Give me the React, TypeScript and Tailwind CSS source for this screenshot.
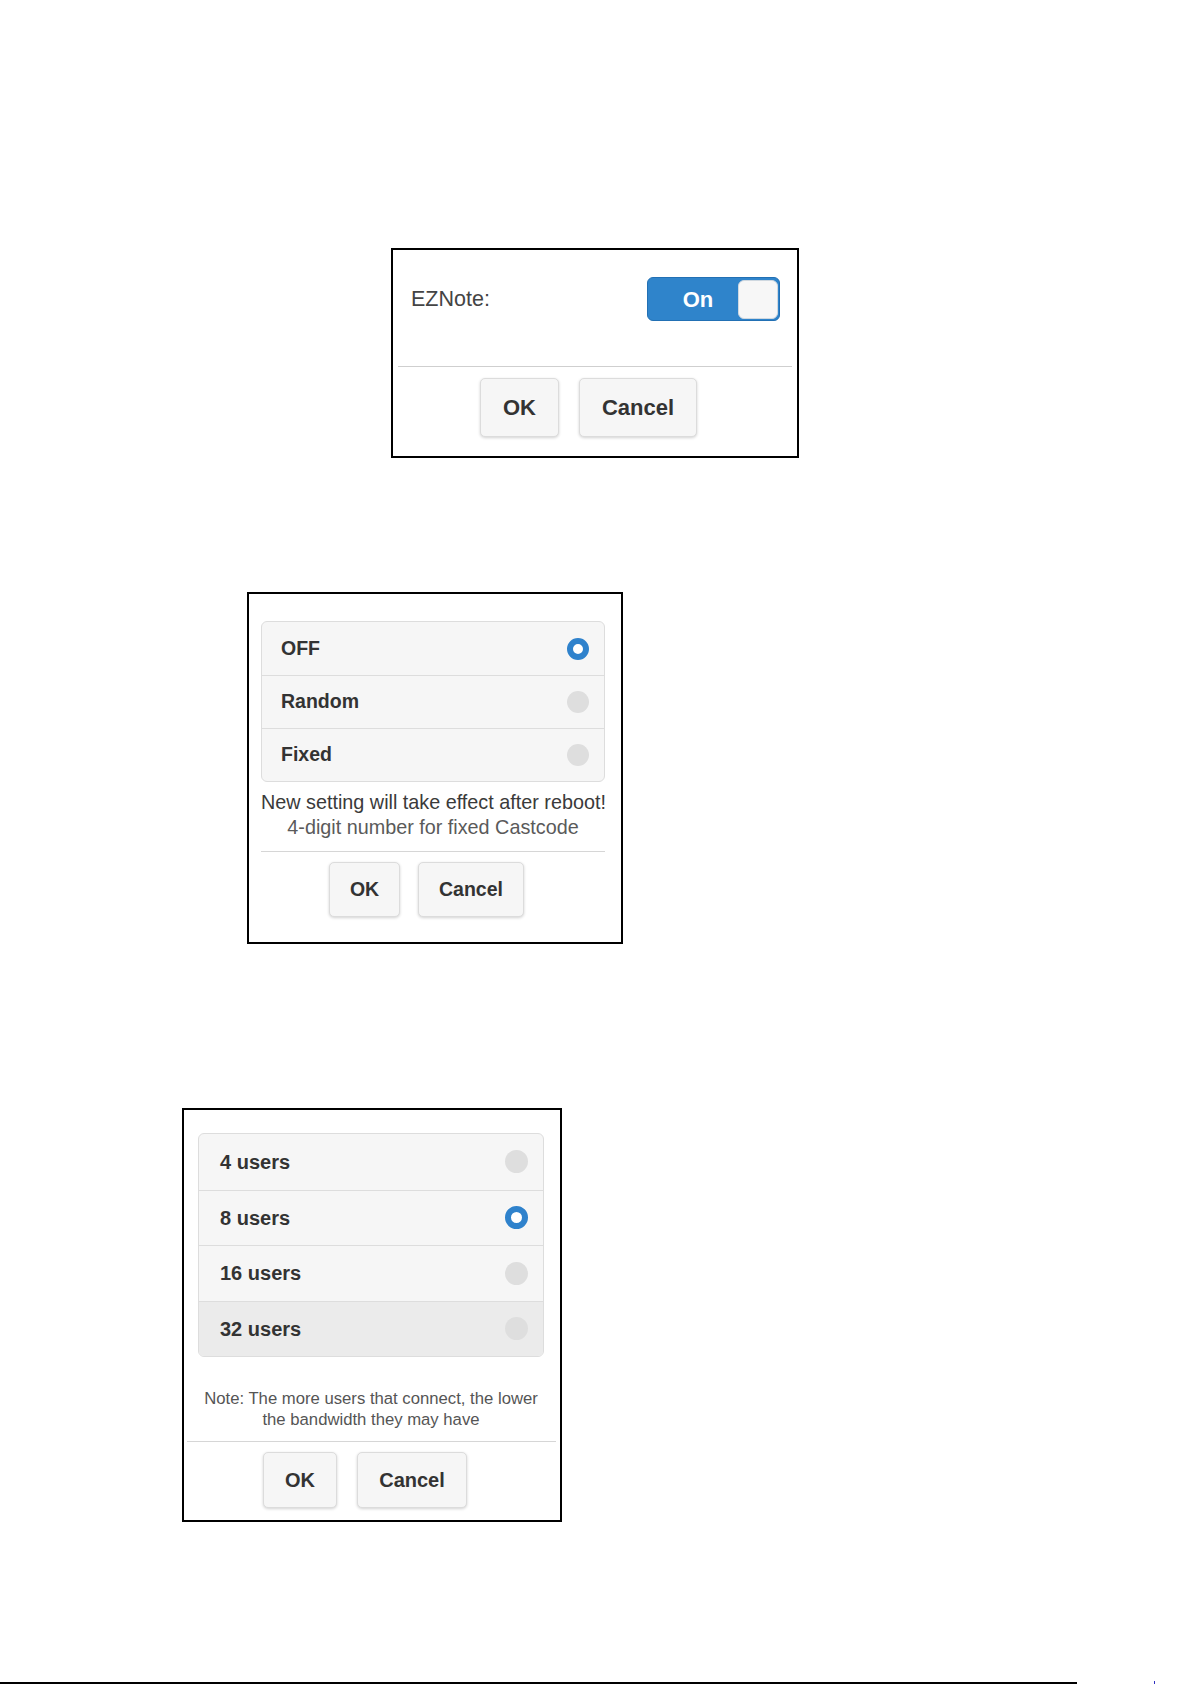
import React from "react";

type Option = { label: string; selected?: boolean; shaded?: boolean };

function Radio({ selected, size }: { selected?: boolean; size: string }) {
  if (selected) {
    return <span className={`${size} rounded-full border-[6px] border-[#2f82cc] bg-white`} />;
  }
  return <span className={`${size} rounded-full bg-[#dedede]`} />;
}

function Btn({ label, className }: { label: string; className: string }) {
  return (
    <button
      className={`flex items-center justify-center rounded-[5px] border border-[#dcdcdc] bg-[#f6f6f6] font-bold text-[#333] shadow-[0_1px_3px_rgba(0,0,0,0.18)] ${className}`}
    >
      {label}
    </button>
  );
}

export default function App() {
  const castcode: Option[] = [{ label: "OFF", selected: true }, { label: "Random" }, { label: "Fixed" }];
  const users: Option[] = [
    { label: "4 users" },
    { label: "8 users", selected: true },
    { label: "16 users" },
    { label: "32 users", shaded: true },
  ];

  return (
    <div className="flex h-[1685px] w-[1192px] flex-col bg-white font-['Liberation_Sans',Arial,sans-serif]">
      {/* EZNote */}
      <div className="ml-[391px] mt-[248px] flex h-[210px] w-[408px] flex-col border-2 border-black">
        <div className="mt-[27px] flex h-[44px] items-center justify-between pl-[18px] pr-[17px]">
          <span className="text-[21.5px] text-[#444]">EZNote:</span>
          <div className="flex h-[44px] w-[133px] items-center rounded-[6px] border border-[#2270b4] bg-[#2f84cb] pr-[1px] pl-[10px]">
            <span className="flex-1 text-center text-[22px] font-bold text-white">On</span>
            <span className="h-[39px] w-[40px] rounded-[6px] border border-[#cfd8e0] bg-[#f7f7f7]" />
          </div>
        </div>
        <div className="mx-[5px] mt-[45px] h-px bg-[#cfcfcf]" />
        <div className="ml-[87px] mt-[11px] flex gap-[20px]">
          <Btn label="OK" className="h-[59px] w-[79px] text-[22px]" />
          <Btn label="Cancel" className="h-[59px] w-[118px] text-[22px]" />
        </div>
      </div>

      {/* Castcode */}
      <div className="ml-[247px] mt-[134px] flex h-[352px] w-[376px] flex-col border-2 border-black">
        <div className="ml-[12px] mt-[27px] w-[344px] overflow-hidden rounded-[6px] border border-[#dddddd] bg-[#f6f6f6]">
          {castcode.map((o, i) => (
            <div
              key={o.label}
              className={`flex h-[53px] items-center justify-between pl-[19px] pr-[15px] ${i > 0 ? "border-t border-[#dddddd]" : ""}`}
            >
              <span className="text-[19.5px] font-bold text-[#333]">{o.label}</span>
              <Radio selected={o.selected} size="h-[22px] w-[22px]" />
            </div>
          ))}
        </div>
        <div className="ml-[12px] mt-[8px] w-[344px] text-center text-[19.8px] leading-[25px] whitespace-nowrap">
          <div className="text-[#3a3a3a]">New setting will take effect after reboot!</div>
          <div className="text-[#5a5a5a]">4-digit number for fixed Castcode</div>
        </div>
        <div className="ml-[12px] mt-[11px] h-px w-[344px] bg-[#d6d6d6]" />
        <div className="ml-[80px] mt-[10px] flex gap-[18px]">
          <Btn label="OK" className="h-[55px] w-[71px] text-[19.5px]" />
          <Btn label="Cancel" className="h-[55px] w-[106px] text-[19.5px]" />
        </div>
      </div>

      {/* Users */}
      <div className="ml-[182px] mt-[164px] flex h-[414px] w-[380px] flex-col border-2 border-black">
        <div className="ml-[14px] mt-[23px] w-[346px] overflow-hidden rounded-[6px] border border-[#dddddd] bg-[#f6f6f6]">
          {users.map((o, i) => (
            <div
              key={o.label}
              className={`flex h-[55.5px] items-center justify-between pl-[21px] pr-[15px] ${i > 0 ? "border-t border-[#dddddd]" : ""} ${o.shaded ? "bg-[#ebebeb]" : ""}`}
            >
              <span className="text-[20px] font-bold text-[#333]">{o.label}</span>
              <Radio selected={o.selected} size="h-[23px] w-[23px]" />
            </div>
          ))}
        </div>
        <div className="ml-[14px] mt-[31px] w-[346px] text-center text-[16.7px] leading-[21px] text-[#555]">
          <div className="whitespace-nowrap">Note: The more users that connect, the lower</div>
          <div>the bandwidth they may have</div>
        </div>
        <div className="ml-[3px] mt-[11px] h-px w-[369px] bg-[#d6d6d6]" />
        <div className="ml-[79px] mt-[10px] flex gap-[20px]">
          <Btn label="OK" className="h-[56px] w-[74px] text-[20px]" />
          <Btn label="Cancel" className="h-[56px] w-[110px] text-[20px]" />
        </div>
      </div>

      {/* page footer rule */}
      <div className="mt-auto mb-px flex items-end">
        <div className="h-[2px] w-[1077px] bg-black" />
        <div className="ml-[77px] h-[3px] w-px bg-[#3030c0]" />
      </div>
    </div>
  );
}
